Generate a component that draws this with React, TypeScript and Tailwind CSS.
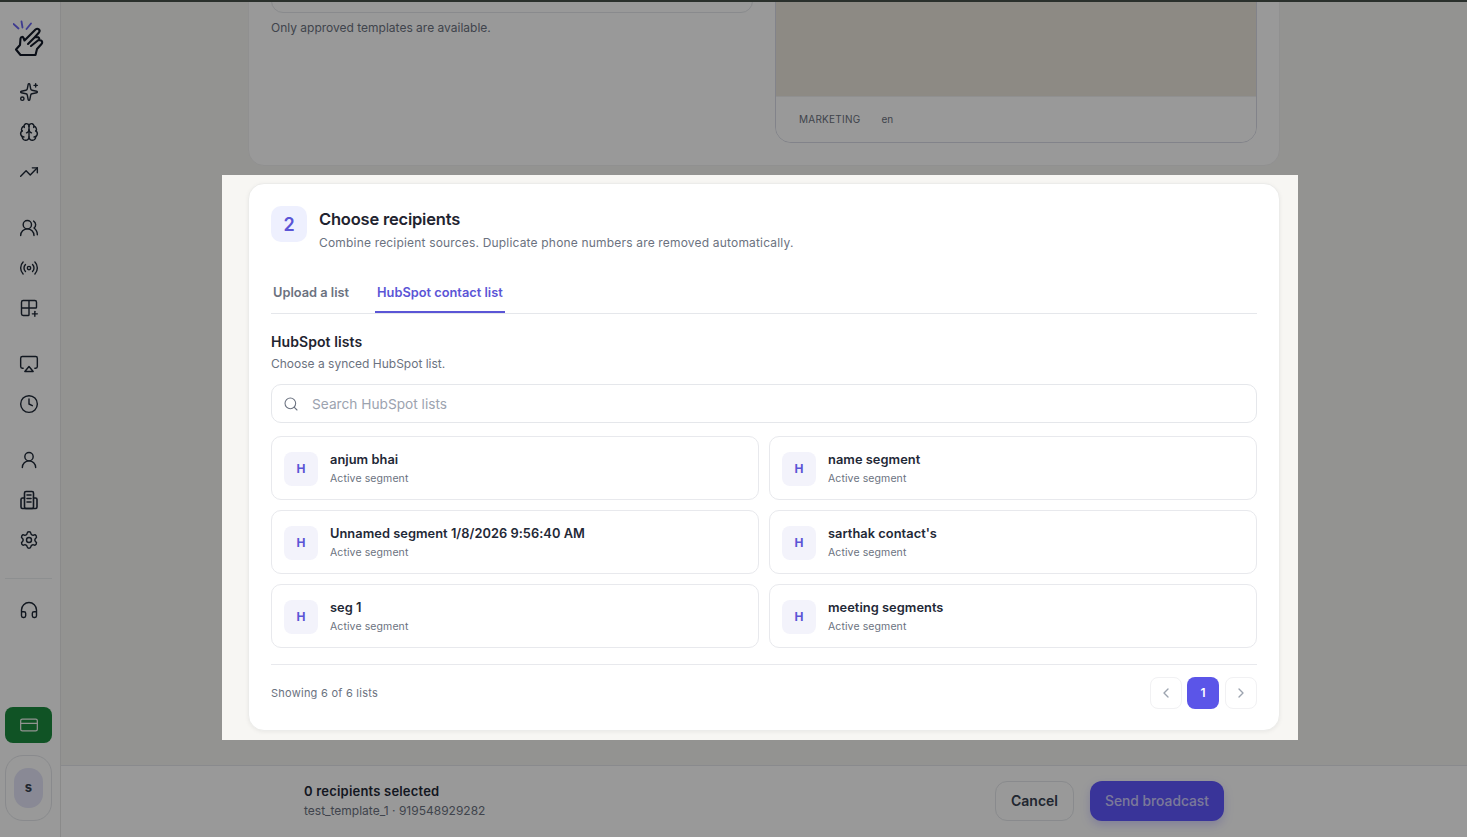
import {
  Airplay,
  Brain,
  ChevronLeft,
  ChevronRight,
  Clock,
  CreditCard,
  Grid2x2Plus,
  Headphones,
  Radio,
  Search,
  Settings,
  Sparkles,
  TrendingUp,
  UserRound,
  UsersRound,
  type LucideIcon,
} from "lucide-react";

const segments = [
  "anjum bhai",
  "name segment",
  "Unnamed segment 1/8/2026 9:56:40 AM",
  "sarthak contact's",
  "seg 1",
  "meeting segments",
];

function Logo() {
  return (
    <svg width="32" height="44" viewBox="13 15 32 44" fill="none" strokeLinecap="round" strokeLinejoin="round">
      <path d="M13.500 24 18.500 28.500M21.500 21.500 22.500 27.500M31 23.500 26.500 29" stroke="#6a63f0" strokeWidth="1.8" />
      <path
        d="M16 49.500 20 45 20.500 38.500C20.700 36.600 23 36.400 23.500 38L24.500 40.500 35.500 29.500C37.800 27.600 40.800 30 39 32.500L34.500 37.500 37 37C39 37 39.800 38.500 39 40L41 40.500C42.500 41.200 42.500 43 41.500 44L37 49 35.500 55H20.500ZM28 44 34.500 37.500M31 46 38.500 40"
        stroke="#111827"
        strokeWidth="2.100"
      />
    </svg>
  );
}

function BuildingIcon() {
  return (
    <svg width="20" height="20" viewBox="0 0 20 20" fill="none" stroke="#1f2937" strokeWidth="1.6" strokeLinecap="round" strokeLinejoin="round">
      <rect x="5.500" y="1.500" width="9" height="17" rx="1.500" />
      <path d="M5.500 8H3.500A1.500 1.500 0 0 0 2 9.500V17A1.500 1.500 0 0 0 3.500 18.500H16.500A1.500 1.500 0 0 0 18 17V9.500A1.500 1.500 0 0 0 16.500 8H14.500" />
      <path d="M8 5h4M8 8.500h4M8 12h4" />
    </svg>
  );
}

function NavIcon({ icon: Icon }: { icon: LucideIcon }) {
  return (
    <div className="flex h-10 w-full items-center justify-center text-[#1f2937]">
      <Icon size={20} strokeWidth={1.7} />
    </div>
  );
}

function Sidebar() {
  return (
    <aside className="flex w-[61px] shrink-0 flex-col items-center border-r border-[#e7e7e7] bg-white pr-[8px] pb-4 pl-[5px]">
      <div className="mt-[13px] flex h-11 w-full items-center justify-center">
        <Logo />
      </div>
      <div className="mt-[13px] w-full">
        <NavIcon icon={Sparkles} />
        <NavIcon icon={Brain} />
        <NavIcon icon={TrendingUp} />
      </div>
      <div className="mt-4 w-full">
        <NavIcon icon={UsersRound} />
        <NavIcon icon={Radio} />
        <NavIcon icon={Grid2x2Plus} />
      </div>
      <div className="mt-4 w-full">
        <NavIcon icon={Airplay} />
        <NavIcon icon={Clock} />
      </div>
      <div className="mt-4 w-full">
        <NavIcon icon={UserRound} />
        <div className="flex h-10 items-center justify-center">
          <BuildingIcon />
        </div>
        <NavIcon icon={Settings} />
      </div>
      <div className="mt-[18px] h-px w-full bg-[#eceef1]" />
      <div className="mt-[11px] w-full">
        <NavIcon icon={Headphones} />
      </div>
      <button className="mt-auto flex h-9 w-full items-center justify-center rounded-lg bg-[#1c8a3e] text-[#f1f5f1]">
        <CreditCard size={20} strokeWidth={1.5} />
      </button>
      <div className="mt-3 flex h-[66px] w-full items-center justify-center rounded-[18px] border border-[#e5e7eb]">
        <div className="flex h-10 w-[29px] items-center justify-center rounded-[14px] bg-[#e4e5f8] text-[13px] font-bold text-[#374151]">
          s
        </div>
      </div>
    </aside>
  );
}

function TemplateCard() {
  return (
    <section className="w-[1032px] shrink-0 rounded-2xl border border-[#f1f1f1] bg-white px-[22px] pt-6 pb-[22px]">
      <div className="grid grid-cols-2 gap-[22px]">
        <div>
          <div className="h-[38px] rounded-xl border border-[#e5e7eb]" />
          <p className="mt-[7px] text-xs text-[#6b7280]">Only approved templates are available.</p>
        </div>
        <div className="overflow-hidden rounded-2xl border border-[#d9dbe6]">
          <div className="h-[120px] bg-[#ece6dd]" />
          <div className="flex h-[46px] items-center gap-[21px] border-t border-[#f0f0f0] bg-white px-[23px] text-[10px] text-[#6b7280]">
            <span className="tracking-[0.25px]">MARKETING</span>
            <span>en</span>
          </div>
        </div>
      </div>
    </section>
  );
}

function SegmentRow({ name }: { name: string }) {
  return (
    <div className="flex h-[64px] items-center gap-3 rounded-[10px] border border-[#e8e9ed] bg-white px-3 pt-[2px]">
      <div className="flex size-[34px] items-center justify-center rounded-lg bg-[#f3f3fb] text-xs font-bold text-[#5b55d6]">
        H
      </div>
      <div className="-mt-px">
        <p className="text-[12.85px] leading-[18px] font-semibold tracking-[0.03px] text-[#1f2937]">{name}</p>
        <p className="mt-[2px] text-[10.5px] leading-[15px] tracking-[0.1px] text-[#6b7280]">Active segment</p>
      </div>
    </div>
  );
}

function RecipientsCard() {
  return (
    <div className="relative w-[1032px] shrink-0">
      <div className="absolute -top-[8px] -right-[18px] -bottom-[9px] -left-[26px] z-10 bg-[#f7f6f3] shadow-[0_0_0_3000px_rgba(0,0,0,0.4)]" />
      <section className="relative z-20 h-[548px] rounded-2xl border border-[#ececea] bg-white px-[22px] pt-[22px] shadow-[0_1px_4px_rgba(0,0,0,0.06)]">
        <div className="flex gap-3">
          <div className="flex size-9 items-center justify-center rounded-[10px] bg-[#eef0fe] pt-[2px] text-lg font-semibold text-[#5b55d6]">
            2
          </div>
          <div>
            <h2 className="text-[16.5px] leading-[26px] font-semibold tracking-[-0.2px] text-[#1f2430]">
              Choose recipients
            </h2>
            <p className="mt-[2px] text-xs leading-[18px] tracking-[0.18px] text-[#6b7280]">
              Combine recipient sources. Duplicate phone numbers are removed automatically.
            </p>
          </div>
        </div>
        <div className="mt-[17px] flex h-[45px] items-start gap-6 border-b border-[#e5e7eb] pt-[14px] text-[12.8px] font-semibold">
          <button className="h-5 px-[2px] leading-[20px] text-[#6b7280]">Upload a list</button>
          <button className="h-[30px] border-b-2 border-[#5b55d6] px-[2px] pb-[8px] leading-[20px] text-[#5b55d6]">
            HubSpot contact list
          </button>
        </div>
        <h3 className="mt-[18px] text-sm leading-5 font-semibold tracking-[0.08px] text-[#1f2430]">HubSpot lists</h3>
        <p className="mt-[3px] text-xs leading-[18px] text-[#6b7280]">Choose a synced HubSpot list.</p>
        <div className="mt-[11px] flex h-[39px] items-center gap-[13px] rounded-[10px] border border-[#e5e7eb] pl-[11px]">
          <Search size={16} strokeWidth={1.6} className="text-[#6b7280]" />
          <span className="mt-[2px] text-[13.7px] text-[#9ca3af]">Search HubSpot lists</span>
        </div>
        <div className="mt-[13px] grid grid-cols-2 gap-x-[10px] gap-y-[10px]">
          {segments.map((name) => (
            <SegmentRow key={name} name={name} />
          ))}
        </div>
        <div className="mt-4 flex items-center justify-between border-t border-[#e8e9ed] pt-3">
          <span className="text-[11px] tracking-[0.25px] text-[#6b7280]">Showing 6 of 6 lists</span>
          <div className="flex gap-[5px]">
            <button className="flex size-8 items-center justify-center rounded-lg border border-[#f1f1f3] text-[#9ca3af]">
              <ChevronLeft size={16} />
            </button>
            <button className="mr-px flex size-8 items-center justify-center rounded-lg bg-[#5b55e8] text-xs font-semibold text-white">
              1
            </button>
            <button className="flex size-8 items-center justify-center rounded-lg border border-[#f1f1f3] text-[#9ca3af]">
              <ChevronRight size={16} />
            </button>
          </div>
        </div>
      </section>
    </div>
  );
}

function FooterBar() {
  return (
    <footer className="flex h-[72px] shrink-0 items-center justify-center border-t border-[#e5e7eb] bg-white pb-px">
      <div className="flex w-[920px] items-center justify-between">
        <div>
          <p className="text-[13px] leading-5 font-semibold tracking-[0.2px] text-[#1f2937]">0 recipients selected</p>
          <p className="text-xs leading-5 text-[#6b7280]">test_template_1 · 919548929282</p>
        </div>
        <div className="flex gap-4">
          <button className="h-10 w-[79px] rounded-xl border border-[#e5e7eb] text-sm font-semibold text-[#374151]">
            Cancel
          </button>
          <button className="h-10 w-[134px] rounded-xl bg-[#6057ff] text-[13.8px] font-medium text-white/70 shadow-[0_4px_10px_rgba(96,87,255,0.25)]">
            Send broadcast
          </button>
        </div>
      </div>
    </footer>
  );
}

export default function App() {
  return (
    <div className="flex h-screen flex-col overflow-hidden bg-[#f6f5f2] font-['Inter',sans-serif]">
      <div className="relative z-[5] h-[2px] shrink-0 bg-[#46504a]" />
      <div className="flex min-h-0 flex-1">
        <Sidebar />
        <main className="flex min-w-0 flex-1 flex-col">
          <div className="flex min-h-0 flex-1 flex-col items-center justify-end gap-[17px] pb-[34px]">
            <TemplateCard />
            <RecipientsCard />
          </div>
          <FooterBar />
        </main>
      </div>
    </div>
  );
}
